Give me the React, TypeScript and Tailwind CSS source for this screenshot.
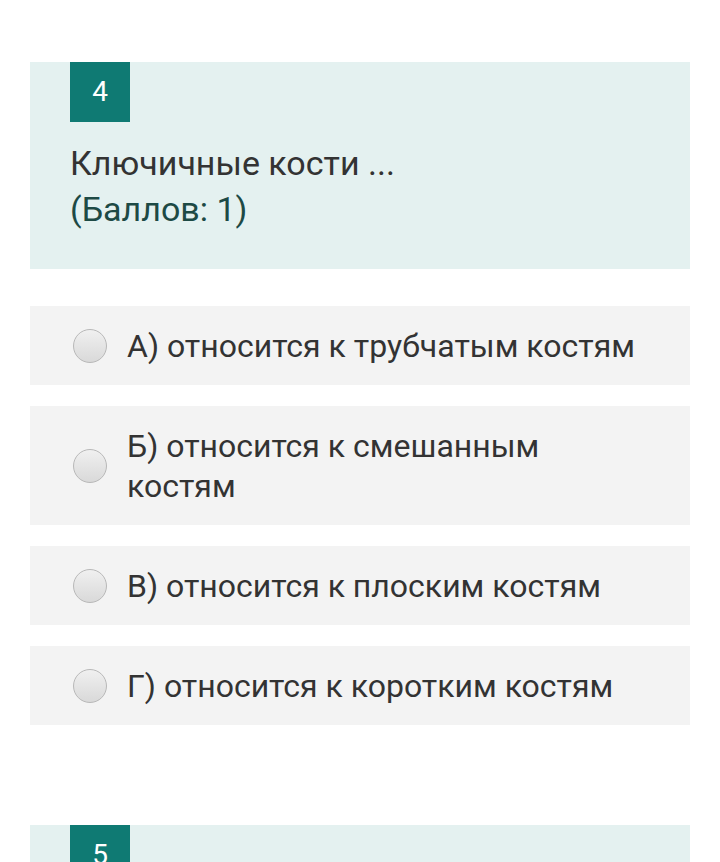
import React from "react";

const options = [
  { label: "А) относится к трубчатым костям" },
  { label: "Б) относится к смешанным костям", wrap: true },
  { label: "В) относится к плоским костям" },
  { label: "Г) относится к коротким костям" },
];

function Radio() {
  return (
    <div className="w-[34px] h-[34px] shrink-0 rounded-full border border-[#b8b8b8] bg-gradient-to-b from-[#f0f0f0] to-[#d9d9d9]" />
  );
}

export default function App() {
  return (
    <div className="w-[720px] h-[862px] overflow-hidden bg-white px-[30px] pt-[62px]" style={{ fontFamily: "Roboto, 'Noto Sans', sans-serif" }}>
      <div className="bg-[#e4f1f0] h-[207px] px-[40px]">
        <div className="w-[60px] h-[60px] bg-[#0f7a73] text-white text-[28px] flex items-center justify-center">4</div>
        <div className="mt-[18px] text-[34px] leading-[46px]">
          <div className="text-[#333333]">Ключичные кости ...</div>
          <div className="text-[#1d4a45]">(Баллов: 1)</div>
        </div>
      </div>
      <div className="mt-[37px] flex flex-col gap-[21px]">
        {options.map((o, i) => (
          <div key={i} className={`bg-[#f3f3f3] flex items-center pl-[43px] pr-[40px] ${o.wrap ? "h-[119px]" : "h-[79px]"}`}>
            <Radio />
            <div className={`ml-[20px] text-[32px] leading-[40px] text-[#333333] ${o.wrap ? "w-[460px]" : ""}`}>{o.label}</div>
          </div>
        ))}
      </div>
      <div className="mt-[100px] bg-[#e4f1f0] h-[100px] px-[40px]">
        <div className="w-[60px] h-[60px] bg-[#0f7a73] text-white text-[28px] flex items-center justify-center">5</div>
      </div>
    </div>
  );
}
